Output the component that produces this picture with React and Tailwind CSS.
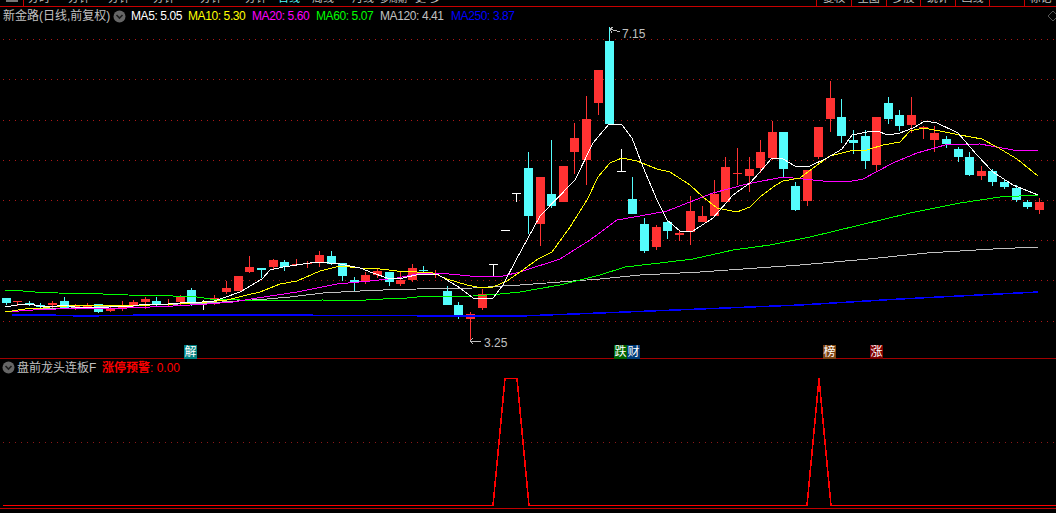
const FONT = "font-['Liberation_Sans','Noto_Sans_CJK_SC',sans-serif]";

const leftTabs = [
  { label: "分时", cls: "w-[40px] text-[#c0c0c0]" },
  { label: "分钟", cls: "w-[40px] text-[#c0c0c0]" },
  { label: "分钟", cls: "w-[45px] text-[#c0c0c0]" },
  { label: "分钟", cls: "w-[47px] text-[#c0c0c0]" },
  { label: "分钟", cls: "w-[45px] text-[#c0c0c0]" },
  { label: "分钟", cls: "w-[33px] text-[#c0c0c0]" },
  { label: "日线", cls: "w-[34px] text-[#54fcfc]" },
  { label: "周线", cls: "w-[40px] text-[#c0c0c0]" },
  { label: "月线", cls: "w-[28px] text-[#c0c0c0]" },
  { label: "多周期", cls: "w-[35px] text-[9px] text-[#c0c0c0]" },
  { label: "更多", cls: "w-[30px] tracking-[4px] text-[#c0c0c0]" },
];

const rightTabs = [
  { label: "复权", cls: "w-[34.6px]" },
  { label: "主图", cls: "w-[34.6px]" },
  { label: "多股", cls: "w-[34.6px]" },
  { label: "统计", cls: "w-[34.6px]" },
  { label: "画线", cls: "w-[34.6px]" },
  { label: "", cls: "w-[34.6px]" },
  { label: "标记", cls: "w-[32px]" },
];

const legend = [
  { label: "MA5: 5.05", cls: "w-[57px] text-white" },
  { label: "MA10: 5.30", cls: "w-[64px] text-[#ffff00]" },
  { label: "MA20: 5.60", cls: "w-[64px] text-[#ff00ff]" },
  { label: "MA60: 5.07", cls: "w-[64px] text-[#00ff00]" },
  { label: "MA120: 4.41", cls: "w-[71px] text-[#c0c0c0]" },
  { label: "MA250: 3.87", cls: "w-[70px] text-[#0000ff]" },
];

// type, body top, body bottom, wick top, wick bottom (page pixels)
const candles = [
  ["c", 298, 303, 298, 305], ["r", 301, 302, 301, 306], ["c", 303, 305, 301, 306], ["c", 305, 307, 303, 308],
  ["r", 303, 305, 301, 308], ["c", 301, 308, 297, 309], ["r", 306, 308, 304, 310], ["r", 305, 307, 303, 308],
  ["c", 304, 312, 304, 313], ["r", 308, 311, 306, 312], ["r", 305, 308, 301, 311], ["r", 302, 305, 300, 307],
  ["r", 299, 302, 297, 309], ["c", 301, 305, 297, 307], ["r", 304, 305, 299, 307], ["r", 297, 302, 295, 305],
  ["c", 290, 302, 288, 306], ["w", 303, 304, 300, 310], ["r", 298, 299, 295, 305], ["r", 288, 292, 281, 294],
  ["r", 276, 291, 276, 291], ["r", 267, 272, 256, 273], ["c", 268, 270, 268, 278], ["r", 260, 267, 259, 270],
  ["c", 262, 267, 260, 271], ["r", 264, 265, 259, 266], ["r", 263, 264, 261, 268], ["r", 255, 262, 251, 267],
  ["c", 256, 264, 251, 265], ["c", 263, 276, 263, 281], ["c", 280, 282, 277, 292], ["r", 275, 282, 272, 284],
  ["r", 271, 275, 268, 278], ["c", 272, 282, 272, 286], ["r", 280, 284, 272, 286], ["r", 268, 280, 264, 282],
  ["c", 270, 271, 266, 273], ["r", 273, 274, 270, 278], ["c", 291, 305, 286, 305], ["c", 305, 315, 302, 319],
  ["r", 314, 319, 312, 342], ["r", 294, 308, 289, 310], ["w", 264, 265, 264, 276], ["w", 230, 231, 230, 231],
  ["w", 193, 194, 193, 202], ["c", 168, 216, 152, 234], ["r", 177, 224, 177, 246], ["c", 194, 206, 140, 208],
  ["r", 166, 202, 166, 202], ["r", 138, 152, 123, 174], ["r", 119, 160, 96, 185], ["r", 70, 103, 70, 115],
  ["c", 41, 124, 27, 124], ["w", 171, 172, 149, 172], ["c", 199, 214, 177, 214], ["c", 224, 251, 218, 253],
  ["r", 227, 247, 225, 250], ["c", 222, 231, 220, 239], ["r", 233, 235, 230, 241], ["r", 211, 232, 196, 245],
  ["r", 216, 222, 206, 222], ["r", 194, 216, 180, 216], ["r", 167, 202, 157, 202], ["r", 173, 174, 148, 185],
  ["r", 169, 176, 157, 192], ["r", 152, 168, 140, 173], ["r", 132, 158, 121, 160], ["c", 132, 169, 132, 177],
  ["c", 186, 210, 182, 211], ["r", 170, 201, 170, 206], ["r", 127, 157, 127, 159], ["r", 98, 119, 81, 132],
  ["c", 117, 136, 99, 143], ["c", 140, 143, 130, 154], ["c", 136, 161, 130, 169], ["r", 117, 165, 117, 172],
  ["c", 103, 119, 97, 124], ["c", 115, 126, 110, 131], ["r", 115, 125, 97, 133], ["r", 127, 128, 126, 139],
  ["r", 133, 140, 126, 152], ["c", 139, 144, 136, 148], ["c", 149, 157, 147, 162], ["c", 157, 175, 152, 176],
  ["r", 171, 176, 166, 180], ["c", 171, 182, 169, 186], ["c", 182, 187, 180, 189], ["c", 188, 200, 185, 202],
  ["c", 202, 207, 200, 209], ["r", 202, 210, 198, 214],
];

const candleColors = { r: "#ff3232", c: "#54fcfc", w: "#ffffff" };

const maLines = [
  {
    color: "#0000ff",
    width: 1.5,
    points: "12,315 47,315 82,316 150,315 260,315 470,316 520,316 600,313 700,309 800,305 900,299 1038,292",
  },
  {
    color: "#c0c0c0",
    width: 1,
    points: "43,309 100,307 150,305 207,303 267,299 290,297 323,293 360,291 383,290 417,289 473,288 503,286 520,285 600,279 640,275 700,272 800,265 868,259 927,253 993,249 1038,247",
  },
  {
    color: "#00ff00",
    width: 1,
    points: "5,290 23,291 35,292 58,293 103,294 128,295 173,296 197,297 210,299 240,300 280,301 323,300 350,301 383,299 407,298 417,297 473,296 500,294 520,292 560,285 600,275 625,267 660,263 693,259 733,250 770,245 810,237 860,225 910,213 960,203 1000,197 1038,195",
  },
  {
    color: "#ff00ff",
    width: 1,
    points: "5,312 33,310 80,308 127,308 173,306 207,304 233,302 257,298 297,292 337,284 370,281 397,278 417,274 437,273 460,275 480,277 503,276 520,272 560,259 590,240 617,220 640,216 667,211 690,202 713,193 747,184 783,177 803,179 823,181 847,182 863,179 893,163 917,153 945,145 980,144 1013,150 1038,151",
  },
  {
    color: "#ffff00",
    width: 1,
    points: "5,312 25,309 43,308 50,307 67,306 87,305 100,305 127,306 150,305 173,304 207,302 227,300 247,295 260,292 280,284 297,281 320,271 340,266 360,268 380,269 397,271 417,272 433,273 447,279 467,285 477,287 493,287 507,281 520,272 538,259 552,252 570,227 587,200 598,177 610,163 622,158 637,161 657,169 670,172 690,185 703,197 717,208 737,212 750,207 760,197 773,187 783,181 800,178 813,168 830,156 850,151 867,150 883,145 900,142 910,131 923,128 940,131 960,135 982,139 997,147 1017,159 1038,176",
  },
  {
    color: "#ffffff",
    width: 1,
    points: "5,307 17,305 29,304 40,306 52,307 63,305 75,307 87,307 98,307 109,307 121,306 133,306 145,304 156,304 168,304 180,303 191,302 202,302 214,301 226,297 240,292 262,279 270,270 283,267 317,262 340,264 360,268 373,273 387,278 403,278 420,274 437,274 447,280 460,288 473,298 493,298 503,285 516,260 540,216 575,180 593,143 609,124 622,125 632,138 643,167 657,200 667,220 680,231 693,231 713,218 733,195 750,183 760,172 772,158 783,159 795,166 810,166 827,158 842,149 852,135 867,132 877,131 888,135 900,133 913,128 925,121 937,123 958,133 977,155 993,172 1013,185 1038,195",
  },
];

const gridRows = [39, 79, 120, 160, 200, 240, 280, 321];

const markers = [
  { label: "解", cls: "left-[184px] bg-[#008080]" },
  { label: "跌", cls: "left-[614px] bg-[#006400]" },
  { label: "财", cls: "left-[627px] bg-[#003c78]" },
  { label: "榜", cls: "left-[823px] bg-[#7d4310]" },
  { label: "涨", cls: "left-[870px] bg-[#800000]" },
];

function Chevron({ className }) {
  return (
    <svg className={className} width="13" height="13" viewBox="0 0 13 13">
      <circle cx="6.5" cy="6.5" r="6" fill="#666666" />
      <path d="M3.5 5 L6.5 8 L9.5 5" fill="none" stroke="#1c1c1c" strokeWidth="1.6" />
    </svg>
  );
}

function Candle({ data, index }) {
  const [type, top, bottom, wickTop, wickBottom] = data;
  const color = candleColors[type];
  const x = Math.round(5.5 + 11.61 * index);
  return (
    <g fill={color}>
      <rect x={x} y={wickTop} width="1" height={wickBottom - wickTop} />
      <rect x={x - 4} y={top} width="9" height={bottom - top} />
    </g>
  );
}

function MainChart() {
  return (
    <svg className="absolute inset-0" width="1056" height="352" viewBox="0 7 1056 352" shapeRendering="crispEdges">
      {gridRows.map((y) => (
        <line key={y} x1="3" x2="1056" y1={y + 0.5} y2={y + 0.5} stroke="#b01818" strokeDasharray="1 5" />
      ))}
      {candles.map((c, i) => (
        <Candle key={i} data={c} index={i} />
      ))}
      {maLines.map((l) => (
        <polyline key={l.color} points={l.points} fill="none" stroke={l.color} strokeWidth={l.width} />
      ))}
      <path d="M610 29 L620 32 M610 29 L613 27 M610 29 L612 33" fill="none" stroke="#c0c0c0" strokeWidth="1" />
      <path d="M470 341 L481 341 M470 341 L473 338 M470 341 L473 344" fill="none" stroke="#c0c0c0" strokeWidth="1" />
      <polygon points="1053,11 1048,16 1053,21 1058,16" fill="none" stroke="#555555" strokeWidth="1" />
    </svg>
  );
}

function SignalChart() {
  return (
    <svg className="absolute inset-0" width="1056" height="153" viewBox="0 360 1056 153" shapeRendering="crispEdges">
      <line x1="3" x2="1056" y1="443.5" y2="443.5" stroke="#8c1818" strokeDasharray="1 5" />
      <line x1="0" x2="1056" y1="509.5" y2="509.5" stroke="#c00000" strokeWidth="1" />
      <polyline
        points="3,506.5 493,506.5 505,379.5 517,379.5 529,506.5 807,506.5 819,379.5 831,506.5 1056,506.5"
        fill="none"
        stroke="#ff0000"
        strokeWidth="1.6"
      />
    </svg>
  );
}

export default function App() {
  return (
    <div className={`w-[1056px] h-[513px] overflow-hidden bg-black flex flex-col ${FONT}`}>
      <div className="h-[7px] shrink-0 border-b border-[#c80000] flex overflow-hidden text-[11px] leading-none">
        <div className="w-[24px] shrink-0 border-r border-[#c80000] flex justify-center">
          <div className="w-[12px] h-[2px] bg-[#777777]" />
        </div>
        <div className="pl-[4px] pb-[2px] flex items-end flex-1">
          {leftTabs.map((t, i) => (
            <span key={i} className={`shrink-0 ${t.cls}`}>
              {t.label}
            </span>
          ))}
        </div>
        <div className="flex items-end">
          {rightTabs.map((t, i) => (
            <span
              key={i}
              className={`h-[6px] pb-[2px] border-l border-[#c80000] flex items-end justify-center text-[#c0c0c0] ${t.cls}`}
            >
              {t.label}
            </span>
          ))}
        </div>
      </div>

      <div className="relative h-[352px] shrink-0 border-b border-[#a00000]">
        <MainChart />
        <div className="relative flex items-center h-[18px] pl-[3px] text-[12px] whitespace-nowrap">
          <span className="w-[110px] text-[#c0c0c0]">新金路(日线,前复权)</span>
          <Chevron className="mr-[5px]" />
          {legend.map((m) => (
            <span key={m.label} className={`tracking-[-0.4px] ${m.cls}`}>
              {m.label}
            </span>
          ))}
        </div>
        <span className="absolute left-[622px] top-[20px] text-[12px] leading-[14px] text-[#c0c0c0]">7.15</span>
        <span className="absolute left-[484px] top-[329px] text-[12px] leading-[14px] text-[#c0c0c0]">3.25</span>
        {markers.map((m) => (
          <span
            key={m.label}
            className={`absolute top-[338px] w-[13px] h-[14px] text-[12px] leading-[14px] text-center text-white ${m.cls}`}
          >
            {m.label}
          </span>
        ))}
      </div>

      <div className="relative flex-1">
        <SignalChart />
        <div className="relative flex items-center h-[17px] pl-[2px] text-[12px] whitespace-nowrap">
          <Chevron className="mr-[2px]" />
          <span className="w-[85px] text-[#c0c0c0]">盘前龙头连板F</span>
          <span className="text-[#ff0000]">
            <span className="font-bold">涨停预警</span>: 0.00
          </span>
        </div>
      </div>
    </div>
  );
}
